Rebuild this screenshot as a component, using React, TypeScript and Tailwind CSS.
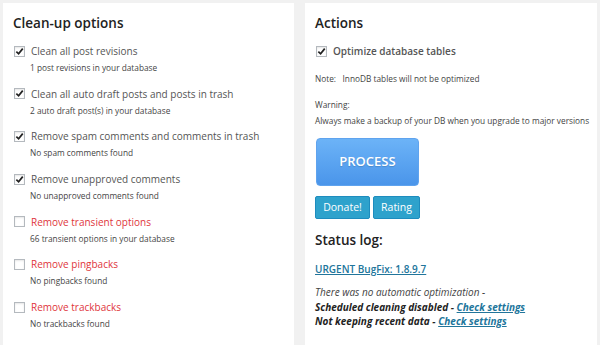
import React from 'react';

const font = { fontFamily: '"Open Sans", "Noto Sans", sans-serif' };

type Option = {
  label: string;
  info: string;
  checked: boolean;
  danger?: boolean;
};

const options: Option[] = [
  { label: 'Clean all post revisions', info: '1 post revisions in your database', checked: true },
  { label: 'Clean all auto draft posts and posts in trash', info: '2 auto draft post(s) in your database', checked: true },
  { label: 'Remove spam comments and comments in trash', info: 'No spam comments found', checked: true },
  { label: 'Remove unapproved comments', info: 'No unapproved comments found', checked: true },
  { label: 'Remove transient options', info: '66 transient options in your database', checked: false, danger: true },
  { label: 'Remove pingbacks', info: 'No pingbacks found', checked: false, danger: true },
  { label: 'Remove trackbacks', info: 'No trackbacks found', checked: false, danger: true },
];

const CheckBox: React.FC<{ checked: boolean }> = ({ checked }) => (
  <span className="w-[11px] h-[11px] shrink-0 border border-[#b4b9be] bg-white flex items-center justify-center shadow-[inset_0_1px_2px_rgba(0,0,0,0.1)]">
    {checked && (
      <svg width="9" height="9" viewBox="0 0 10 10">
        <path d="M1.5 5.2 L4 7.6 L8.6 1.8" fill="none" stroke="#222" strokeWidth="1.9" />
      </svg>
    )}
  </span>
);

export default function App() {
  return (
    <div style={font} className="w-[600px] h-[345px] overflow-hidden bg-[#f1f1f1] flex gap-[11px] pt-[3px] pl-[3px] pr-[3px]">
      {/* left panel */}
      <div className="w-[291px] bg-white pl-[10px] pt-[12px]">
        <h2 className="text-[13.5px] font-semibold text-[#222] leading-[16px]">Clean-up options</h2>
        <div className="mt-[13px] flex flex-col gap-[13.7px]">
          {options.map((o) => (
            <div key={o.label}>
              <div className="flex items-center gap-[6px] pl-[1px]">
                <CheckBox checked={o.checked} />
                <span className={`text-[10px] leading-[14px] ${o.danger ? 'text-[#e0353b]' : 'text-[#555]'}`}>
                  {o.label}
                </span>
              </div>
              <div className="pl-[17px] mt-[4px] text-[8.3px] leading-[11px] text-[#444]">{o.info}</div>
            </div>
          ))}
        </div>
      </div>

      {/* right panel */}
      <div className="w-[292px] bg-white pl-[10px] pt-[12px]">
        <h2 className="text-[13.5px] font-semibold text-[#222] leading-[16px]">Actions</h2>
        <div className="mt-[13px] flex items-center gap-[6px] pl-[1px]">
          <CheckBox checked={true} />
          <span className="text-[10px] leading-[14px] font-semibold text-[#555]">Optimize database tables</span>
        </div>
        <div className="mt-[15px] text-[8.3px] leading-[11px] text-[#444]">
          Note:&nbsp;&nbsp; InnoDB tables will not be optimized
        </div>
        <div className="mt-[15px] text-[8.3px] leading-[11px] text-[#444]">Warning:</div>
        <div className="mt-[5px] text-[8.3px] leading-[11px] text-[#444]">
          Always make a backup of your DB when you upgrade to major versions
        </div>
        <button className="mt-[12px] ml-[1px] w-[103px] h-[48px] rounded-[4px] bg-gradient-to-b from-[#6cb3f7] to-[#4a95ea] border border-[#5fa3ee] text-white text-[13px] font-semibold flex items-center justify-center [text-shadow:0_1px_1px_rgba(0,0,0,0.15)]">
          PROCESS
        </button>
        <div className="mt-[10px] flex gap-[3px]">
          <button className="w-[55px] h-[23px] rounded-[2px] bg-[#2ea2cc] border border-[#1e8cbe] text-white text-[10.5px] flex items-center justify-center">
            Donate!
          </button>
          <button className="w-[47px] h-[23px] rounded-[2px] bg-[#2ea2cc] border border-[#1e8cbe] text-white text-[10.5px] flex items-center justify-center">
            Rating
          </button>
        </div>
        <h3 className="mt-[13px] text-[13.5px] font-semibold text-[#222] leading-[16px]">Status log:</h3>
        <a className="block mt-[14px] text-[10px] leading-[14px] font-semibold text-[#21759b] underline">URGENT BugFix: 1.8.9.7</a>
        <div className="mt-[9px] text-[10px] leading-[14.5px] italic text-[#444]">
          <div>There was no automatic optimization -</div>
          <div className="font-bold text-[#222]">
            Scheduled cleaning disabled - <a className="text-[#21759b] underline">Check settings</a>
          </div>
          <div className="font-bold text-[#222]">
            Not keeping recent data - <a className="text-[#21759b] underline">Check settings</a>
          </div>
        </div>
      </div>
    </div>
  );
}
